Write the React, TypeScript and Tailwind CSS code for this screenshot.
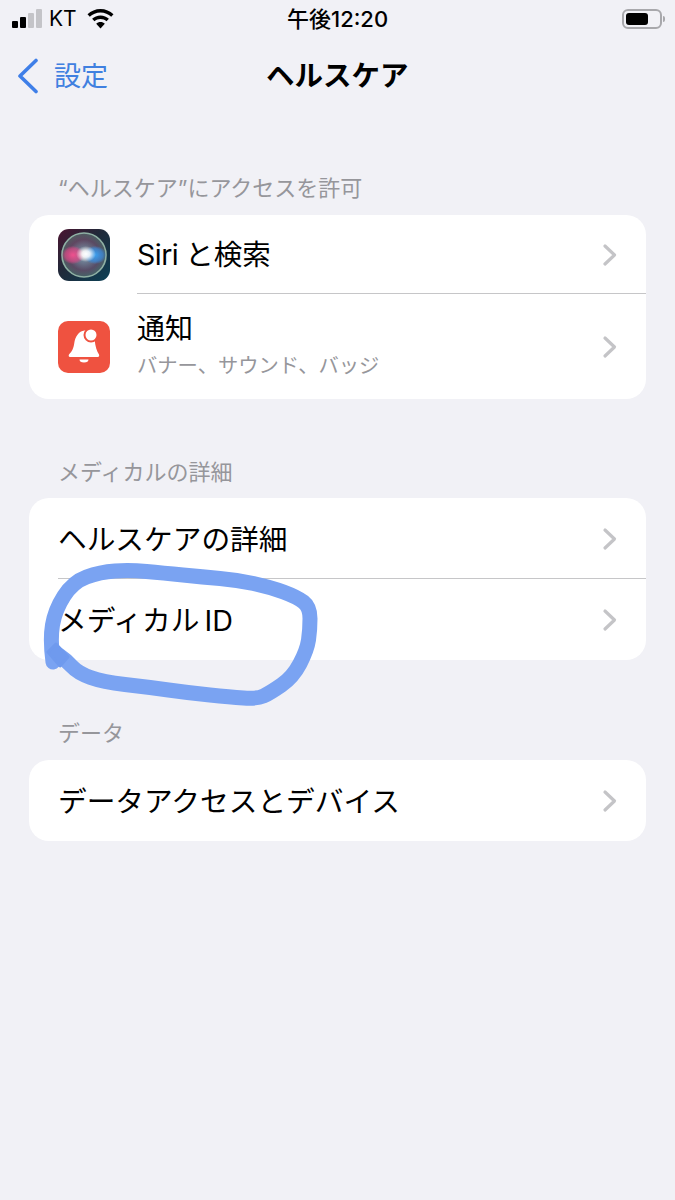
import React from 'react';

const font = { fontFamily: '"Inter", "Noto Sans CJK JP", sans-serif' };

const ringPoints: [number, number][] = [
    [53, 662], [50, 640], [55, 610], [73, 582], [100, 572], [130, 570], [163, 573], [203, 577], [237, 580], [270, 587], [297, 597], [310, 607],
    [310, 630], [307, 650], [293, 677], [270, 693], [257, 699], [230, 697], [190, 693], [147, 687], [103, 682], [78, 673], [66, 660], [54, 652],
];

// smooth the traced points into one stroke
const smoothPath = (pts: [number, number][]) => {
    let d = `M${pts[0][0]} ${pts[0][1]}`;
    for (let i = 1; i < pts.length - 1; i++) {
        const mx = (pts[i][0] + pts[i + 1][0]) / 2;
        const my = (pts[i][1] + pts[i + 1][1]) / 2;
        d += `Q${pts[i][0]} ${pts[i][1]} ${mx} ${my}`;
    }
    const last = pts[pts.length - 1];
    return `${d}L${last[0]} ${last[1]}`;
};

const Chevron = () => (
    <svg className="h-[24px] w-[16px] shrink-0" viewBox="0 0 16 24" fill="none" stroke="#c4c4c7" strokeWidth={3.2} strokeLinecap="round" strokeLinejoin="round">
        <path d="M3 3l9.5 9L3 21" />
    </svg>
);

const SiriIcon = () => (
    <svg className="h-[52px] w-[52px] shrink-0" viewBox="0 0 52 52">
        <defs>
            <linearGradient id="siriBg" x1="0" y1="0" x2="1" y2="1">
                <stop offset="0" stopColor="#4a1430" />
                <stop offset="0.45" stopColor="#1f2a3a" />
                <stop offset="1" stopColor="#0c4055" />
            </linearGradient>
            <radialGradient id="siriOrb" cx="0.5" cy="0.5" r="0.5">
                <stop offset="0" stopColor="#ffffff" />
                <stop offset="0.3" stopColor="#9aa8c0" />
                <stop offset="0.7" stopColor="#7a5a78" />
                <stop offset="1" stopColor="#5f7c78" />
            </radialGradient>
            <radialGradient id="siriPink" cx="0.5" cy="0.5" r="0.5">
                <stop offset="0" stopColor="#f0508e" />
                <stop offset="0.7" stopColor="#d94a86" stopOpacity="0.7" />
                <stop offset="1" stopColor="#d94a86" stopOpacity="0.1" />
            </radialGradient>
            <radialGradient id="siriBlue" cx="0.5" cy="0.5" r="0.5">
                <stop offset="0" stopColor="#3aa0f0" />
                <stop offset="0.7" stopColor="#3a8fe0" stopOpacity="0.7" />
                <stop offset="1" stopColor="#3a8fe0" stopOpacity="0.1" />
            </radialGradient>
            <radialGradient id="siriCore" cx="0.5" cy="0.5" r="0.5">
                <stop offset="0" stopColor="#ffffff" />
                <stop offset="0.4" stopColor="#ffffff" stopOpacity="0.85" />
                <stop offset="1" stopColor="#ffffff" stopOpacity="0" />
            </radialGradient>
        </defs>
        <rect width="52" height="52" rx="11" fill="url(#siriBg)" />
        <circle cx="26" cy="26" r="22" fill="url(#siriOrb)" opacity="0.65" />
        <circle cx="26" cy="26" r="22" fill="none" stroke="#8fb0a4" strokeWidth="1.6" />
        <ellipse cx="15" cy="26" rx="11" ry="9" fill="url(#siriPink)" />
        <ellipse cx="37" cy="26" rx="11" ry="9" fill="url(#siriBlue)" />
        <ellipse cx="28" cy="25" rx="10" ry="8" fill="url(#siriCore)" />
    </svg>
);

const BellIcon = () => (
    <svg className="h-[52px] w-[52px] shrink-0" viewBox="0 0 52 52">
        <rect width="52" height="52" rx="10" fill="#ef5240" />
        <path d="M11 33.500c3-3 4.500-6 5.300-11.500.8-6 4.500-12 10.200-12.500 5 0 9.500 4 10.200 10 .7 6 2 10.500 4.300 14 .5 1.200 0 2.500-1.200 2.500H12c-1.200 0-1.700-1.400-1-2.500z" fill="#ffffff" />
        <path d="M21.500 38.500h9a4.500 3 0 0 1-9 0z" fill="#ffffff" />
        <circle cx="33" cy="14" r="6.500" fill="#ffffff" stroke="#ef5240" strokeWidth="2" />
    </svg>
);

const SectionLabel = ({ children, className }: { children: React.ReactNode; className: string }) => (
    <div className={`px-[58px] text-[22px] leading-[30px] text-[#96969b] ${className}`}>{children}</div>
);

const PlainRow = ({ children, border }: { children: React.ReactNode; border?: boolean }) => (
    <div className="relative flex h-[81px] items-center pr-[28px]">
        <span className="flex-1 pl-[29px] pt-[4px] text-[28.7px] leading-none text-black">{children}</span>
        <Chevron />
        {border && <div className="absolute bottom-0 left-[29px] right-0 h-px bg-[#c6c6c8]" />}
    </div>
);

export default function App() {
    return (
        <div className="relative h-[1200px] w-[675px] overflow-hidden bg-[#f1f1f6]" style={font}>
            {/* status bar */}
            <div className="relative flex h-[37px] items-center px-[12px]">
                <div className="flex items-end gap-[2px]">
                    <span className="h-[7px] w-[6px] rounded-[1px] bg-black" />
                    <span className="h-[11px] w-[6px] rounded-[1px] bg-black" />
                    <span className="h-[15px] w-[6px] rounded-[1px] bg-[#c4c4c8]" />
                    <span className="h-[19px] w-[6px] rounded-[1px] bg-[#c4c4c8]" />
                </div>
                <span className="ml-[7px] text-[21px] leading-none text-black">KT</span>
                <svg className="ml-[10px] h-[20px] w-[27px]" viewBox="0 0 27 20" fill="#000">
                    <path d="M13.500 0C8.500 0 4 2 .5 5.300l2.300 2.500C5.600 5.100 9.400 3.500 13.500 3.500s7.900 1.600 10.700 4.300l2.300-2.500C23 2 18.500 0 13.500 0z" />
                    <path d="M13.500 6.500c-3.300 0-6.200 1.300-8.400 3.300l2.400 2.500c1.600-1.400 3.700-2.300 6-2.300s4.400.9 6 2.300l2.400-2.500c-2.200-2-5.100-3.300-8.400-3.300z" />
                    <path d="M13.500 13c-1.700 0-3.200.6-4.300 1.700l4.300 4.800 4.300-4.800C16.700 13.600 15.200 13 13.500 13z" />
                </svg>
                <span className="absolute left-[287px] top-[7px] text-[22px] font-medium leading-[24px] text-black">午後12:20</span>
                <div className="ml-auto mr-[-2px] flex items-center">
                    <div className="flex h-[20px] w-[40px] items-center rounded-[6px] border-2 border-[#a8a8ac] p-[2px]">
                        <div className="h-full w-[22px] rounded-[3px] bg-black" />
                    </div>
                    <span className="ml-[1px] h-[6px] w-[2px] rounded-r-sm bg-[#a8a8ac]" />
                </div>
            </div>

            {/* nav bar */}
            <div className="relative flex h-[78px] items-center pl-[17px]">
                <svg className="h-[36px] w-[22px]" viewBox="0 0 22 36" fill="none" stroke="#3f7fe8" strokeWidth={3.6} strokeLinecap="round" strokeLinejoin="round">
                    <path d="M19 2.500L3 18l16 15.500" />
                </svg>
                <span className="ml-[15px] text-[27px] leading-none text-[#4080e0]">設定</span>
                <span className="absolute left-[266px] top-[21px] text-[28.5px] font-bold leading-[36px] text-black">ヘルスケア</span>
            </div>

            <SectionLabel className="mt-[58px]">“ヘルスケア”にアクセスを許可</SectionLabel>

            <div className="mx-[29px] mt-[12px] rounded-[20px] bg-white">
                <div className="relative flex h-[79px] items-center pl-[29px] pr-[28px]">
                    <SiriIcon />
                    <span className="ml-[27px] flex-1 pt-[2px] text-[28.5px] leading-none text-black">
                        <span className="tracking-[-0.5px]">Siri</span>
                        <span className="ml-[7px]">と検索</span>
                    </span>
                    <Chevron />
                    <div className="absolute bottom-0 left-[108px] right-0 h-px bg-[#c6c6c8]" />
                </div>
                <div className="flex h-[105px] items-center pl-[29px] pr-[28px]">
                    <BellIcon />
                    <div className="ml-[27px] flex-1">
                        <div className="mb-[3px] mt-[-3px] text-[28px] leading-[38px] text-black">通知</div>
                        <div className="text-[20.3px] leading-[30px] text-[#96969b]">バナー、サウンド、バッジ</div>
                    </div>
                    <Chevron />
                </div>
            </div>

            <SectionLabel className="mt-[58px]">メディカルの詳細</SectionLabel>

            <div className="mx-[29px] mt-[11px] rounded-[20px] bg-white">
                <PlainRow border>ヘルスケアの詳細</PlainRow>
                <PlainRow>
                    メディカル<span className="ml-[5px]">ID</span>
                </PlainRow>
            </div>

            <SectionLabel className="mt-[58px]">データ</SectionLabel>

            <div className="mx-[29px] mt-[12px] rounded-[20px] bg-white">
                <PlainRow>データアクセスとデバイス</PlainRow>
            </div>

            {/* hand drawn ring on top of the screenshot */}
            <svg className="pointer-events-none absolute left-0 top-0 h-[1200px] w-[675px]" viewBox="0 0 675 1200" fill="none">
                <path d={smoothPath(ringPoints)} stroke="#7aa3f2" strokeWidth={15} strokeLinecap="round" strokeLinejoin="round" />
                <path d="M48 652L56 644L68 657L60 666Z" fill="#6f9aee" stroke="#6f9aee" strokeWidth={3} strokeLinejoin="round" />
            </svg>
        </div>
    );
}
